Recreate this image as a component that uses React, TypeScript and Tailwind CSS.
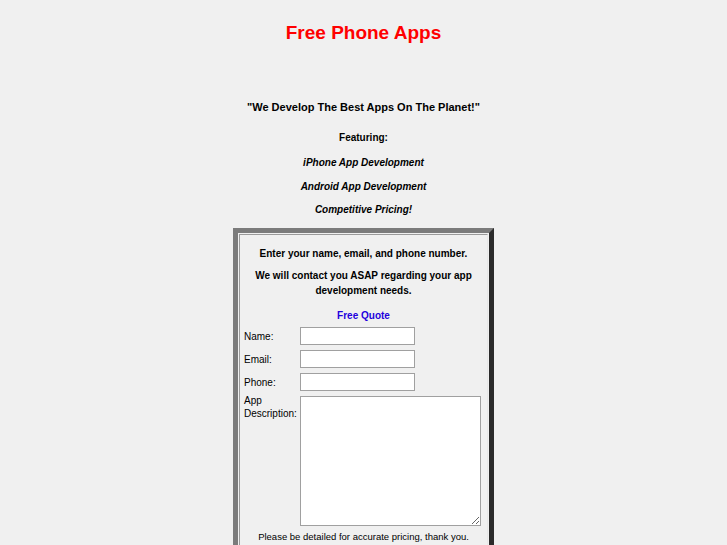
export default function App() {
  return (
    <div className="min-h-[545px] bg-[#f0f0f0] text-black" style={{ fontFamily: '"Liberation Sans", Arial, sans-serif' }}>
      <div className="flex flex-col items-center">
        <h1 className="mt-[21px] text-[19px] font-bold leading-[24px] text-[#ff0000]">Free Phone Apps</h1>

        <p className="mt-[55px] text-[11px] font-bold leading-[14px]">"We Develop The Best Apps On The Planet!"</p>
        <p className="mt-[17px] text-[10px] font-bold leading-[13px]">Featuring:</p>
        <p className="mt-[12px] text-[10px] font-bold italic leading-[13px]">iPhone App Development</p>
        <p className="mt-[11px] text-[10px] font-bold italic leading-[13px]">Android App Development</p>
        <p className="mt-[10px] text-[10px] font-bold italic leading-[13px]">Competitive Pricing!</p>

        <div className="mt-[12px] w-[261px] border-[5px] border-t-[#7b7b7b] border-l-[#7b7b7b] border-r-[#2b2b2b] border-b-[#2b2b2b] p-px">
          <div className="border border-t-[#9a9a9a] border-l-[#9a9a9a] border-r-[#e8e8e8] border-b-[#e8e8e8] px-[4px] pb-[4px] pt-[12px]">
            <p className="text-center text-[10px] font-bold leading-[13px]">Enter your name, email, and phone number.</p>
            <p className="mt-[8px] text-center text-[10px] font-bold leading-[15px]">
              We will contact you ASAP regarding your app development needs.
            </p>
            <p className="mt-[11px] text-center text-[10px] font-bold leading-[13px] text-[#2200dd]">Free Quote</p>

            <div className="mt-[5px] flex flex-col gap-[5px]">
              <Row label="Name:" />
              <Row label="Email:" />
              <Row label="Phone:" />
              <div className="flex items-start">
                <div className="-mt-[2px] w-[56px] text-[10px] leading-[13px]">
                  App
                  <br />
                  Description:
                </div>
                <textarea className="h-[130px] w-[181px] resize border border-[#a0a0a0] bg-white text-[10px] outline-none" />
              </div>
            </div>

            <p className="mt-[4px] text-center text-[9.5px] leading-[13px]">Please be detailed for accurate pricing, thank you.</p>
          </div>
        </div>
      </div>
    </div>
  );
}

function Row({ label }: { label: string }) {
  return (
    <div className="flex items-center">
      <div className="w-[56px] text-[10px] leading-[13px]">{label}</div>
      <input type="text" className="h-[18px] w-[115px] border border-[#a0a0a0] bg-white px-1 text-[10px] outline-none" />
    </div>
  );
}
